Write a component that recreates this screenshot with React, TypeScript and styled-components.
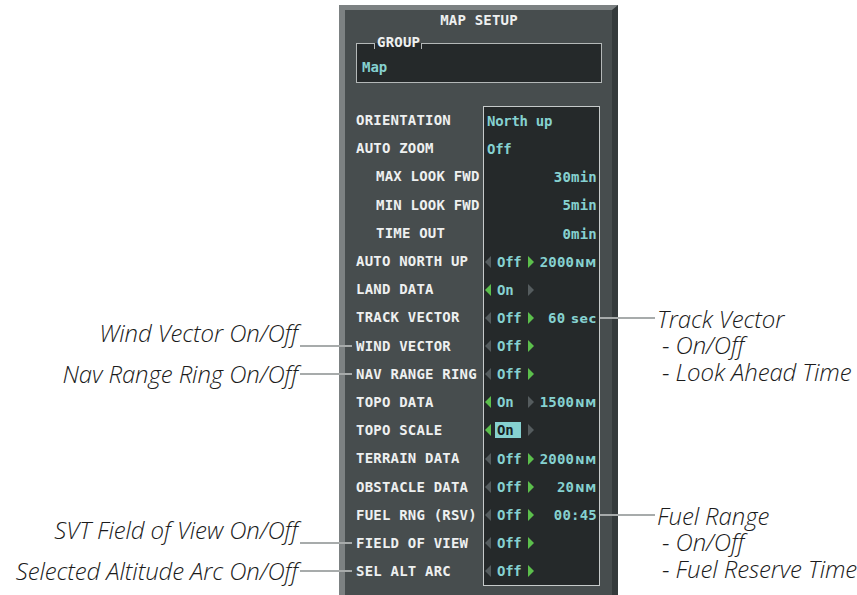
import React from 'react';
import styled, { createGlobalStyle } from 'styled-components';

const GlobalStyle = createGlobalStyle`
  html, body { margin: 0; padding: 0; background: #ffffff; }
  body { font-family: "DejaVu Sans Mono", monospace; }
`;

const ROW_H = 28.2;
const CYAN = '#86d1d0';
const LABEL = '#eef0f0';

const Page = styled.div`
  position: relative;
  width: 857px;
  height: 595px;
  box-sizing: border-box;
  padding: 5px 0 0 339px;
  overflow: hidden;
  background: #ffffff;
`;

const Panel = styled.div`
  width: 279px;
  height: 590px;
  box-sizing: border-box;
  border-left: 6px solid #7c8182;
  border-top: 5px solid #7c8182;
  border-right: 6px solid #343a3b;
  background: #474d4e;
  padding: 0 10px 0 11px;
  display: flex;
  flex-direction: column;
  font-family: "DejaVu Sans Mono", monospace;
  font-weight: bold;
`;

const Title = styled.div`
  height: 20px;
  line-height: 20px;
  text-align: center;
  color: ${LABEL};
  font-size: 14px;
  letter-spacing: 0.2px;
`;

const GroupBox = styled.div`
  position: relative;
  margin-top: 13px;
  height: 40px;
  box-sizing: border-box;
  border: 1px solid #b4b8b8;
  background: #25292a;
  padding: 16px 0 0 5px;
`;

const GroupLabel = styled.div`
  position: absolute;
  top: -9px;
  left: 17px;
  height: 14px;
  line-height: 14px;
  padding: 0 2px 0 3px;
  font-size: 14px;
  letter-spacing: 0.2px;
  color: ${LABEL};
  background: linear-gradient(to bottom, #474d4e 0, #474d4e 8px, #25292a 8px);
  &::before,
  &::after {
    content: '';
    position: absolute;
    top: 8px;
    bottom: 0;
    width: 1px;
    background: #b4b8b8;
  }
  &::before { left: 0; }
  &::after { right: 0; }
`;

const GroupValue = styled.div`
  line-height: 14px;
  font-size: 14px;
  color: ${CYAN};
`;

const Settings = styled.div`
  margin-top: 23px;
  display: flex;
`;

const LabelColumn = styled.div`
  width: 127px;
  display: flex;
  flex-direction: column;
`;

const LabelRow = styled.div<{ $indent?: boolean }>`
  position: relative;
  height: ${ROW_H}px;
  display: flex;
  align-items: center;
  padding-left: ${(p) => (p.$indent ? 20 : 0)}px;
  color: ${LABEL};
  font-size: 14px;
  letter-spacing: 0.2px;
  white-space: nowrap;
`;

const ValueBox = styled.div`
  width: 117px;
  height: 480px;
  box-sizing: border-box;
  border: 1px solid #c6caca;
  background: #25292a;
  display: flex;
  flex-direction: column;
`;

const ValueRow = styled.div`
  position: relative;
  height: ${ROW_H}px;
  display: flex;
  align-items: center;
  padding: 0 2px 0 1px;
  color: ${CYAN};
  font-size: 14px;
  letter-spacing: -0.3px;
  white-space: nowrap;
`;

const PlainText = styled.span`
  margin-left: 2px;
`;

const Arrow = styled.svg<{ $on: boolean }>`
  flex: none;
  width: 6px;
  height: 12px;
  margin-right: 1px;
  fill: ${(p) => (p.$on ? '#5cbf4c' : '#555c5e')};
`;

const StateCell = styled.span`
  flex: none;
  width: 36px;
  box-sizing: border-box;
  padding-left: 5px;
`;

const StateText = styled.span<{ $hl?: boolean }>`
  display: inline-block;
  line-height: 16px;
  ${(p) =>
    p.$hl
      ? `
    margin-left: -2px;
    padding: 0 8px 0 2px;
    background: ${CYAN};
    color: #162022;
  `
      : ''}
`;

const Amount = styled.span`
  flex: 1;
  text-align: right;
  letter-spacing: 0.2px;
`;

const Unit = styled.span<{ $gap?: boolean }>`
  font-family: "DejaVu Sans", sans-serif;
  font-size: ${(p) => (p.$gap ? 12.5 : 11)}px;
  letter-spacing: 0.8px;
  margin-left: ${(p) => (p.$gap ? 6 : 1)}px;
`;

const CalloutFont = `
  font-family: "Open Sans", "Liberation Sans", sans-serif;
  font-style: italic;
  font-weight: 300;
  font-size: 24px;
  color: #1b1b1b;
  letter-spacing: -0.1px;
  white-space: nowrap;
`;

const LeftCallout = styled.div`
  position: absolute;
  right: calc(100% + 4px);
  top: 50%;
  height: 0;
  display: flex;
  align-items: center;
  ${CalloutFont}
`;

const LeftText = styled.span<{ $raised?: boolean }>`
  line-height: 24px;
  margin-bottom: ${(p) => (p.$raised ? 25 : 0)}px;
`;

const LeaderLine = styled.span<{ $w: number }>`
  flex: none;
  width: ${(p) => p.$w}px;
  height: 2px;
  background: #a7abab;
`;

const LeftLeader = styled(LeaderLine)`
  margin-left: 2px;
`;

const RightCallout = styled.div`
  position: absolute;
  left: calc(100% + 1px);
  top: 50%;
  margin-top: -13px;
  display: flex;
  align-items: flex-start;
  ${CalloutFont}
`;

const RightLeader = styled(LeaderLine)`
  margin-top: 12px;
`;

const RightText = styled.div`
  margin-left: 2px;
  margin-top: 1px;
  line-height: 26.5px;
  display: flex;
  flex-direction: column;
`;

const SubLine = styled.span`
  padding-left: 5px;
`;

type RowData = {
  label: string;
  indent?: boolean;
  plain?: string;
  toggle?: { on: boolean; hl?: boolean };
  num?: string;
  unit?: string;
  unitGap?: boolean;
  left?: { text: string; raised?: boolean };
  right?: string[];
};

const rows: RowData[] = [
  { label: 'ORIENTATION', plain: 'North up' },
  { label: 'AUTO ZOOM', plain: 'Off' },
  { label: 'MAX LOOK FWD', indent: true, num: '30min' },
  { label: 'MIN LOOK FWD', indent: true, num: '5min' },
  { label: 'TIME OUT', indent: true, num: '0min' },
  { label: 'AUTO NORTH UP', toggle: { on: false }, num: '2000', unit: 'NM' },
  { label: 'LAND DATA', toggle: { on: true } },
  {
    label: 'TRACK VECTOR',
    toggle: { on: false },
    num: '60',
    unit: 'sec',
    unitGap: true,
    right: ['Track Vector', '- On/Off', '- Look Ahead Time'],
  },
  { label: 'WIND VECTOR', toggle: { on: false }, left: { text: 'Wind Vector On/Off', raised: true } },
  { label: 'NAV RANGE RING', toggle: { on: false }, left: { text: 'Nav Range Ring On/Off' } },
  { label: 'TOPO DATA', toggle: { on: true }, num: '1500', unit: 'NM' },
  { label: 'TOPO SCALE', toggle: { on: true, hl: true } },
  { label: 'TERRAIN DATA', toggle: { on: false }, num: '2000', unit: 'NM' },
  { label: 'OBSTACLE DATA', toggle: { on: false }, num: '20', unit: 'NM' },
  {
    label: 'FUEL RNG (RSV)',
    toggle: { on: false },
    num: '00:45',
    right: ['Fuel Range', '- On/Off', '- Fuel Reserve Time'],
  },
  { label: 'FIELD OF VIEW', toggle: { on: false }, left: { text: 'SVT Field of View On/Off', raised: true } },
  { label: 'SEL ALT ARC', toggle: { on: false }, left: { text: 'Selected Altitude Arc On/Off' } },
];

const LeftArrow = ({ on }: { on: boolean }) => (
  <Arrow $on={on} viewBox="0 0 6 12">
    <polygon points="6,0 0,6 6,12" />
  </Arrow>
);

const RightArrow = ({ on }: { on: boolean }) => (
  <Arrow $on={on} viewBox="0 0 6 12">
    <polygon points="0,0 6,6 0,12" />
  </Arrow>
);

const Value = ({ row }: { row: RowData }) => (
  <ValueRow>
    {row.plain && <PlainText>{row.plain}</PlainText>}
    {row.toggle && (
      <>
        <LeftArrow on={row.toggle.on} />
        <StateCell>
          <StateText $hl={row.toggle.hl}>{row.toggle.on ? 'On' : 'Off'}</StateText>
        </StateCell>
        <RightArrow on={!row.toggle.on} />
      </>
    )}
    {row.num && (
      <Amount>
        {row.num}
        {row.unit && <Unit $gap={row.unitGap}>{row.unit}</Unit>}
      </Amount>
    )}
    {row.right && (
      <RightCallout>
        <RightLeader $w={55} />
        <RightText>
          <span>{row.right[0]}</span>
          {row.right.slice(1).map((t) => (
            <SubLine key={t}>{t}</SubLine>
          ))}
        </RightText>
      </RightCallout>
    )}
  </ValueRow>
);

export default function App() {
  return (
    <>
      <GlobalStyle />
      <Page>
        <Panel>
          <Title>MAP SETUP</Title>
          <GroupBox>
            <GroupLabel>GROUP</GroupLabel>
            <GroupValue>Map</GroupValue>
          </GroupBox>
          <Settings>
            <LabelColumn>
              {rows.map((r) => (
                <LabelRow key={r.label} $indent={r.indent}>
                  {r.label}
                  {r.left && (
                    <LeftCallout>
                      <LeftText $raised={r.left.raised}>{r.left.text}</LeftText>
                      <LeftLeader $w={52} />
                    </LeftCallout>
                  )}
                </LabelRow>
              ))}
            </LabelColumn>
            <ValueBox>
              {rows.map((r) => (
                <Value key={r.label} row={r} />
              ))}
            </ValueBox>
          </Settings>
        </Panel>
      </Page>
    </>
  );
}
